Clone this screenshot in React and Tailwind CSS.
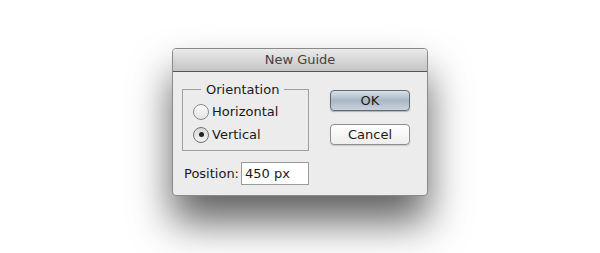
export default function App() {
  return (
    <div className="w-[600px] h-[253px] bg-white pt-[48px] font-['DejaVu_Sans',sans-serif] text-[13px] text-[#1a1a1a]">
      <div className="mx-auto w-[256px] h-[148px] rounded-[4px] bg-[#ececec] border border-[#8a8a8a] shadow-[0_26px_40px_rgba(0,0,0,0.62)] flex flex-col overflow-hidden">
        <div className="h-[23px] shrink-0 bg-gradient-to-b from-[#ebebeb] to-[#c4c4c4] border-b border-[#555] flex items-center justify-center text-[#4a4040]">
          New Guide
        </div>
        <div className="flex px-[9px] pt-[9px]">
          <div className="flex flex-col">
            <fieldset className="w-[127px] h-[70px] border border-[#a0a0a0] px-[10px] pt-[2px] pb-[4px]">
              <legend className="px-[5px] ml-[8px] leading-[17px]">Orientation</legend>
              <label className="flex items-center gap-[3px] h-[23px]">
                <span className="w-[16px] h-[16px] rounded-full border border-[#8a8a8a] bg-gradient-to-b from-[#fafafa] to-[#e4e4e4]" />
                Horizontal
              </label>
              <label className="flex items-center gap-[3px] h-[23px]">
                <span className="w-[16px] h-[16px] rounded-full border border-[#707070] bg-gradient-to-b from-[#d8d8d8] to-[#f4f4f4] flex items-center justify-center">
                  <span className="w-[5px] h-[5px] rounded-full bg-[#222]" />
                </span>
                Vertical
              </label>
            </fieldset>
            <div className="flex items-center mt-[11px] ml-[2px] gap-[2px]">
              <span>Position:</span>
              <div className="w-[68px] h-[23px] bg-white border border-[#9a9a9a] flex items-center px-[3px]">450 px</div>
            </div>
          </div>
          <div className="flex flex-col ml-[21px] mt-[9px] gap-[13px]">
            <button className="w-[80px] h-[21px] rounded-[4px] border border-[#5f6a75] bg-gradient-to-b from-[#d8e0e8] via-[#a9b7c4] to-[#c9d3dd] shadow-[0_1px_1px_rgba(0,0,0,0.25)]">OK</button>
            <button className="w-[80px] h-[21px] rounded-[4px] border border-[#8e8e8e] bg-gradient-to-b from-[#ffffff] to-[#ededed] shadow-[0_1px_1px_rgba(0,0,0,0.15)]">Cancel</button>
          </div>
        </div>
      </div>
    </div>
  )
}
